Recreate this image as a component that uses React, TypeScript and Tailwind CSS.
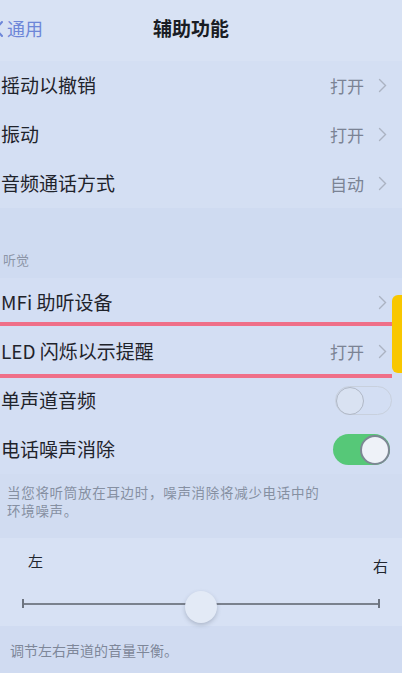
import React from "react";

const Chevron = () => (
  <svg width="9" height="15" viewBox="0 0 9 15" className="ml-[14px]">
    <path d="M1.5 1.5 L7.5 7.5 L1.5 13.5" fill="none" stroke="#abb3c2" strokeWidth="1.4" strokeLinecap="round" />
  </svg>
);

const Row = ({ label, value, chevron = true }: { label: string; value?: string; chevron?: boolean }) => (
  <div className="h-[49px] flex items-center justify-between pl-[1px] pr-[15px]">
    <span className="text-[19px] text-[#1f232b]">{label}</span>
    <div className="flex items-center">
      {value && <span className="text-[17px] text-[#7b8394]">{value}</span>}
      {chevron && <Chevron />}
    </div>
  </div>
);

const Toggle = ({ on }: { on: boolean }) =>
  on ? (
    <div className="w-[57px] h-[31px] rounded-full bg-[#56c878] flex items-center justify-end">
      <div className="w-[30px] h-[30px] rounded-full bg-[#eef2f8] border-[2px] border-[#7d8794]" />
    </div>
  ) : (
    <div className="w-[57px] h-[29px] rounded-full border border-[#c8d0dd] flex items-center">
      <div className="w-[28px] h-[28px] rounded-full bg-[#d9e2f2] border border-[#b0b8c6]" />
    </div>
  );

export default function App() {
  return (
    <div
      className="w-[402px] h-[673px] overflow-hidden bg-[#d2ddf2] flex flex-col relative"
      style={{ fontFamily: '"Noto Sans CJK SC", "Noto Sans", sans-serif' }}
    >
      <div className="h-[61px] shrink-0 grid grid-cols-[1fr_auto_1fr] items-center bg-[#d8e2f4] pb-[4px]">
        <div className="flex items-center text-[#6d86d8] text-[18px]">
          <svg width="10" height="18" viewBox="0 0 10 18" className="-ml-[6px] mr-[3px]">
            <path d="M8 2 L2 9 L8 16" fill="none" stroke="#6d86d8" strokeWidth="2" strokeLinecap="round" />
          </svg>
          通用
        </div>
        <div className="text-[19px] font-bold text-[#1a1d24] pr-[20px]">辅助功能</div>
        <div />
      </div>

      <div className="shrink-0 bg-[#d4dff3]">
        <Row label="摇动以撤销" value="打开" />
        <Row label="振动" value="打开" />
        <Row label="音频通话方式" value="自动" />
      </div>

      <div className="h-[70px] shrink-0 flex items-end pb-[9px] pl-[3px] bg-[#cfdbf1]">
        <span className="text-[13px] text-[#8d96a8]">听觉</span>
      </div>

      <div className="relative shrink-0 bg-[#d3def3]">
        <Row label="MFi 助听设备" />
        <Row label="LED 闪烁以示提醒" value="打开" />
        <div className="absolute left-0 right-[10px] top-[44px] h-[4px] bg-[#ef6f88]" />
        <div className="absolute left-0 right-[10px] top-[96px] h-[4px] bg-[#ef6f88]" />
        <div className="absolute right-0 top-[17px] w-[10px] h-[78px] rounded-l-[6px] bg-[#f8c700]" />
      </div>

      <div className="shrink-0 bg-[#d3def3]">
        <div className="h-[49px] flex items-center justify-between pl-[1px] pr-[10px]">
          <span className="text-[19px] text-[#1f232b]">单声道音频</span>
          <Toggle on={false} />
        </div>
        <div className="h-[49px] flex items-center justify-between pl-[1px] pr-[12px]">
          <span className="text-[19px] text-[#1f232b]">电话噪声消除</span>
          <Toggle on={true} />
        </div>
      </div>

      <div className="shrink-0 h-[64px] pt-[9px] pl-[7px] text-[13.5px] leading-[18px] tracking-[0.7px] text-[#8690a2] bg-[#d1dcf1]">
        当您将听筒放在耳边时，噪声消除将减少电话中的
        <br />
        环境噪声。
      </div>

      <div className="shrink-0 h-[88px] bg-[#d7e1f4] px-[22px] pt-[12px] flex flex-col">
        <div className="flex justify-between items-start text-[15px] text-[#22262e]">
          <span className="ml-[6px]">左</span>
          <span className="mt-[5px] -mr-[8px]">右</span>
        </div>
        <div className="relative mt-[16px] h-[20px] flex items-center">
          <div className="w-[2px] h-[9px] bg-[#6d7480]" />
          <div className="flex-1 h-[2px] bg-[#7a818d]" />
          <div className="w-[2px] h-[9px] bg-[#6d7480]" />
          <div className="absolute left-[163px] top-[-3px] w-[32px] h-[32px] rounded-full bg-[#e3eaf6] shadow-[0_2px_4px_rgba(80,90,110,0.3)]" />
        </div>
      </div>

      <div className="flex-1 pt-[14px] pl-[10px] text-[14px] text-[#7e8799] bg-[#d0dbf1]">
        调节左右声道的音量平衡。
      </div>
    </div>
  );
}
